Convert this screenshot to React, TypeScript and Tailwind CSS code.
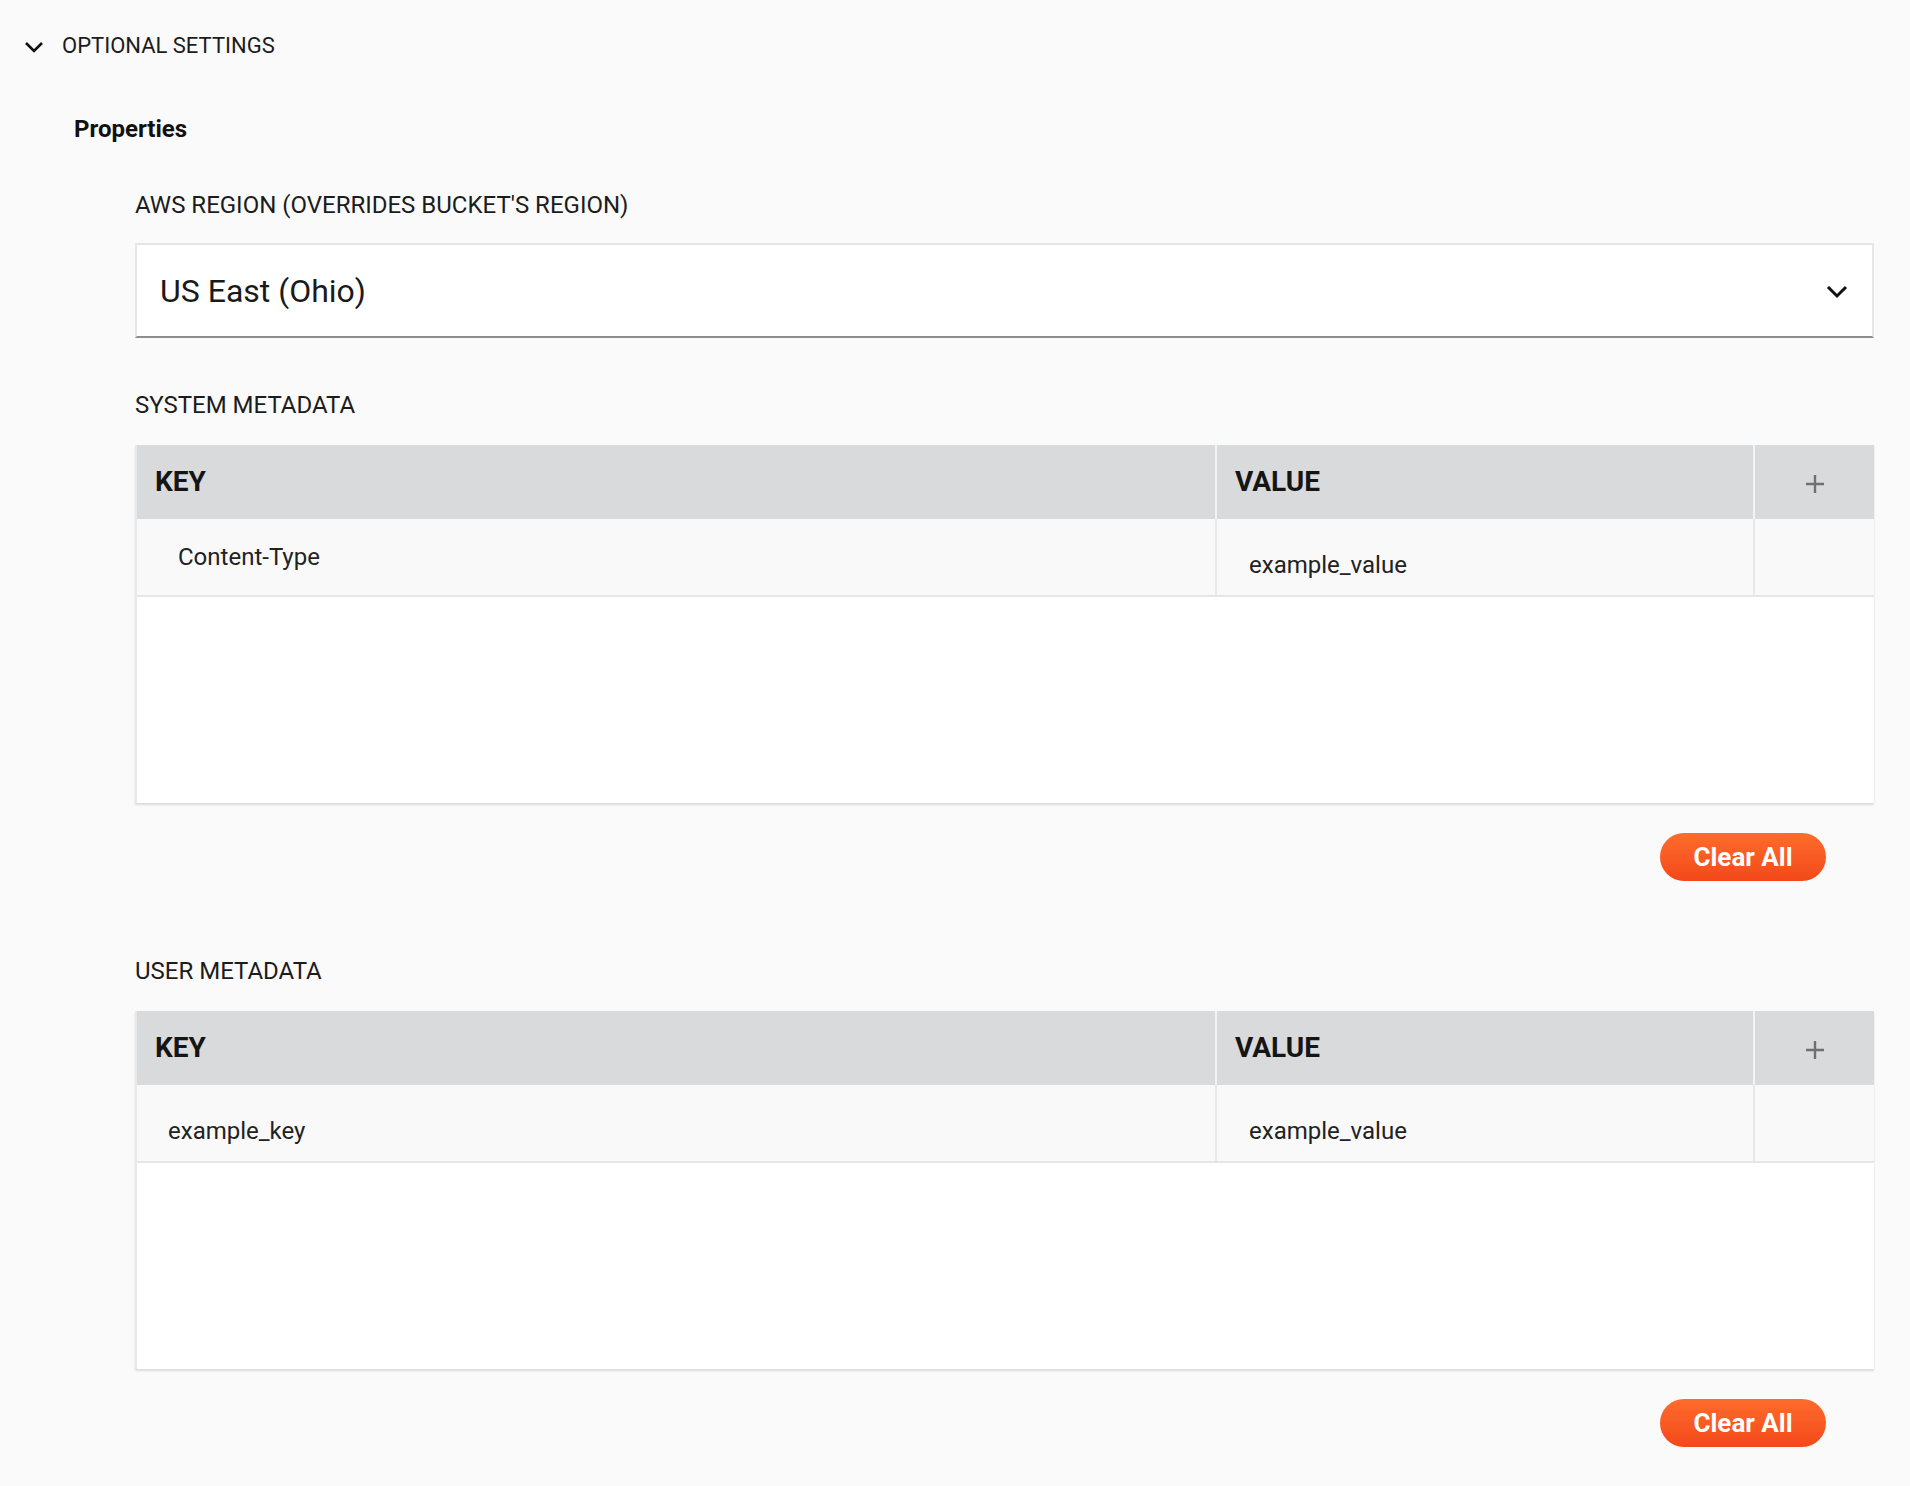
type Row = {
    k: string;
    v: string;
    keyPad: string;
    keyShift: boolean;
};

const PlusIcon = () => (
    <svg viewBox="0 0 20 20" className="w-[20px] h-[20px]" fill="none" stroke="#707070" strokeWidth={2.4}>
        <path d="M10 1 V19 M1 10 H19" />
    </svg>
);

const MetaTable = ({ row }: { row: Row }) => {
    return (
        <div className="bg-white border-l-2 border-[#e9e9e9] shadow-[0_2px_2px_rgba(0,0,0,0.12)]">
            {/* header */}
            <div className="flex h-[74px] bg-[#d9dadc]">
                <div className="flex-1 flex items-center pl-[18px] border-r-2 border-[#f4f4f4]">
                    <span className="text-[28px] font-bold text-[#151515]">KEY</span>
                </div>
                <div className="w-[538px] flex items-center pl-[18px] border-r-2 border-[#f4f4f4]">
                    <span className="text-[28px] font-bold text-[#151515]">VALUE</span>
                </div>
                <div className="w-[119px] flex items-center justify-center pt-[3px]">
                    <PlusIcon />
                </div>
            </div>
            {/* row */}
            <div className="flex h-[78px] bg-[#f9f9f9] border-b-2 border-[#e6e6e6]">
                <div className={`flex-1 flex items-center border-r-2 border-[#e8e8e8] ${row.keyPad} ${row.keyShift ? 'pt-4' : ''}`}>
                    <span className="text-[24px] text-[#222]">{row.k}</span>
                </div>
                <div className="w-[538px] flex items-center pl-[32px] pt-4 border-r-2 border-[#e8e8e8]">
                    <span className="text-[24px] text-[#222]">{row.v}</span>
                </div>
                <div className="w-[119px]" />
            </div>
            <div className="h-[206px]" />
        </div>
    );
};

const ClearButton = () => (
    <div className="flex justify-end pr-[48px] mt-[30px]">
        <button className="w-[166px] h-[48px] rounded-full bg-gradient-to-b from-[#ff6b2c] to-[#f3481a] text-white text-[26px] font-bold">
            Clear All
        </button>
    </div>
);

export default function App() {
    return (
        <div className="min-h-screen bg-[#fafafa] pb-[39px] font-['Roboto',sans-serif] text-[#1c1c1c]">
            <div className="flex items-center pl-[22px] pt-[32px] h-[59px]">
                <svg viewBox="0 0 24 24" className="w-[24px] h-[24px] mt-[3px]" fill="none" stroke="#111" strokeWidth={2.6}>
                    <path d="M4 8 L12 16 L20 8" />
                </svg>
                <span className="ml-[16px] text-[22px] leading-[28px]">OPTIONAL SETTINGS</span>
            </div>

            <div className="pl-[74px] pr-[36px]">
                <h3 className="mt-[56px] text-[24px] leading-[28px] font-bold text-[#111]">Properties</h3>

                <div className="pl-[61px]">
                    <div className="mt-[48px] text-[24px] leading-[28px]">AWS REGION (OVERRIDES BUCKET'S REGION)</div>
                    <div className="mt-[24px] h-[95px] bg-white border-2 border-[#e6e6e6] border-b-[#8d8d8d] flex items-center justify-between pl-[23px] pr-[23px]">
                        <span className="text-[32px] text-[#1a1a1a]">US East (Ohio)</span>
                        <svg viewBox="0 0 24 24" className="w-[24px] h-[24px]" fill="none" stroke="#111" strokeWidth={3}>
                            <path d="M3 8 L12 17 L21 8" />
                        </svg>
                    </div>

                    <div className="mt-[53px] text-[24px] leading-[28px]">SYSTEM METADATA</div>
                    <div className="mt-[26px]">
                        <MetaTable row={{ k: 'Content-Type', v: 'example_value', keyPad: 'pl-[41px]', keyShift: false }} />
                    </div>
                    <ClearButton />

                    <div className="mt-[76px] text-[24px] leading-[28px]">USER METADATA</div>
                    <div className="mt-[26px]">
                        <MetaTable row={{ k: 'example_key', v: 'example_value', keyPad: 'pl-[31px]', keyShift: true }} />
                    </div>
                    <ClearButton />
                </div>
            </div>
        </div>
    );
}
